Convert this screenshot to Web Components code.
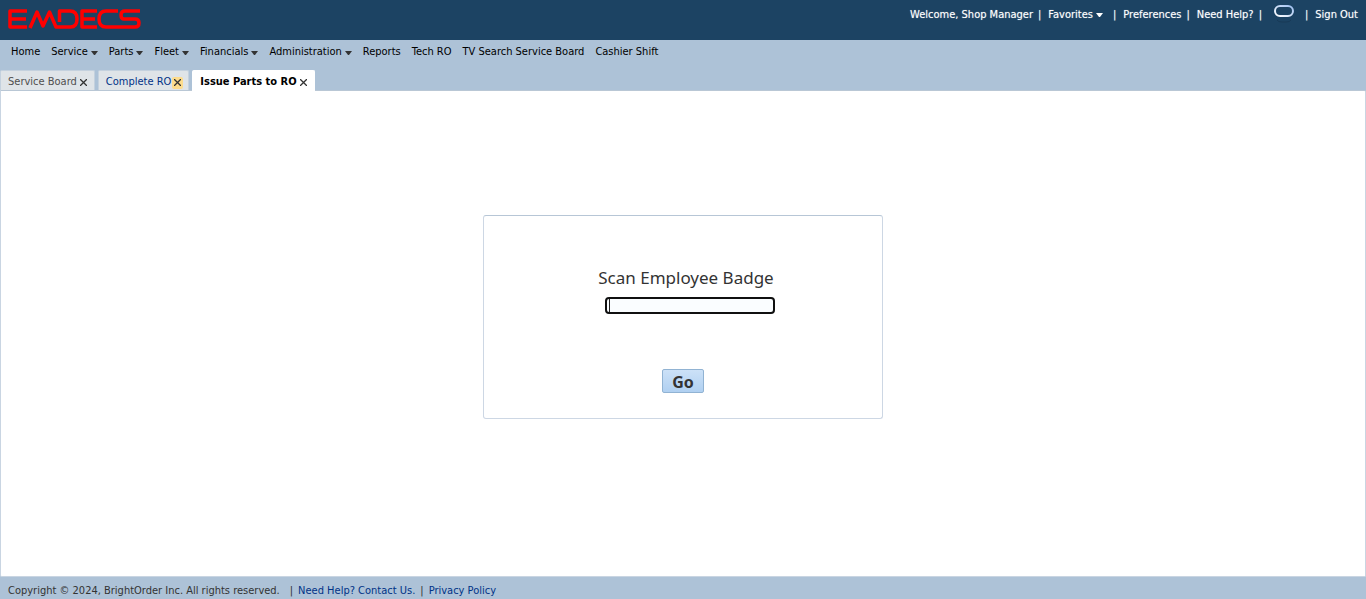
<!DOCTYPE html>
<html lang="en">
<head>
<meta charset="utf-8">
<title>EMDECS - Issue Parts to RO</title>
<style>
body { margin: 0; font: 11px/16px "DejaVu Sans Condensed", "Noto Sans", sans-serif; background: #adc2d7; color: #000; }
</style>
</head>
<body>
<fleet-app>
  <app-header slot="header">
    <header-item>Welcome, Shop Manager</header-item>
    <header-item href="#favorites" menu>Favorites</header-item>
    <header-item href="#preferences">Preferences</header-item>
    <header-item href="#help">Need Help?</header-item>
    <header-item><status-oval></status-oval></header-item>
    <header-item href="#signout">Sign Out</header-item>
  </app-header>
  <main-menu slot="menu">
    <menu-item>Home</menu-item>
    <menu-item menu>Service</menu-item>
    <menu-item menu>Parts</menu-item>
    <menu-item menu>Fleet</menu-item>
    <menu-item menu>Financials</menu-item>
    <menu-item menu>Administration</menu-item>
    <menu-item>Reports</menu-item>
    <menu-item>Tech RO</menu-item>
    <menu-item>TV Search Service Board</menu-item>
    <menu-item>Cashier Shift</menu-item>
  </main-menu>
  <tab-strip slot="tabs">
    <page-tab>Service Board</page-tab>
    <page-tab state="hover">Complete RO</page-tab>
    <page-tab state="active">Issue Parts to RO</page-tab>
  </tab-strip>
  <badge-panel></badge-panel>
  <app-footer slot="footer"></app-footer>
</fleet-app>
<script>
const define = (name, html, setup) => customElements.define(name, class extends HTMLElement {
  connectedCallback() {
    if (this.shadowRoot) return;
    this.attachShadow({ mode: 'open' }).innerHTML = html;
    if (setup) setup(this, this.shadowRoot);
  }
});
const arrow = '<svg class="arrow" width="7" height="4" viewBox="0 0 7 4" aria-hidden="true"><path d="M0 0h7L4 4H3z" fill="currentColor"/></svg>';

define('fleet-app', `
<style>
  :host { display: flex; flex-direction: column; min-height: 100vh; }
  main { flex: 1; display: flex; align-items: center; justify-content: center; box-sizing: border-box;
    background: #fff; border: 1px solid #c9d5e2; border-top-color: #b9c7d5; border-radius: 0 2px 2px 2px; }
</style>
<slot name="header"></slot><slot name="menu"></slot><slot name="tabs"></slot>
<main><slot></slot></main><slot name="footer"></slot>`);

define('app-header', `
<style>
  :host { display: flex; justify-content: space-between; box-sizing: border-box; height: 40px;
    padding: 6px 8px 0; background: #1c4363; color: #fff; }
  nav { display: flex; padding-top: 1px; }
</style>
<svg width="134" height="26" viewBox="8 6 134 26" role="img" aria-label="EMDECS" fill="none" stroke="#f00" stroke-width="3.500" stroke-linejoin="round">
  <path d="M27 11H10V27H27M10 19H26"/>
  <path d="M30 28L37 12L43 26L49.500 12L56 27H70.500Q77 27 77 19Q77 11 70 11H59.500V22"/>
  <path d="M97 11H82V27H97M82 19H95"/>
  <path d="M118 11H106Q99 11 99 19Q99 27 106 27H135Q139 27 139 23Q139 19 135 19H124Q121 19 121 15Q121 11 125 11H140"/>
</svg>
<nav aria-label="User"><slot></slot></nav>`);

define('header-item', `
<style>
  :host { display: flex; align-items: flex-start; text-shadow: 0 0 1px #ffffff80; white-space: nowrap; }
  :host(:not(:last-child))::after { content: "|"; margin: 0 7px 0 5px; }
  :host([menu]:not(:last-child))::after { margin-left: 10px; }
  a { color: inherit; text-decoration: none; }
  .arrow { margin-left: 3px; margin-bottom: 1px; }
</style>
<slot></slot>`, (el, root) => {
  if (!el.hasAttribute('href')) return;
  const link = document.createElement('a');
  link.href = el.getAttribute('href');
  link.innerHTML = '<slot></slot>' + (el.hasAttribute('menu') ? arrow : '');
  root.querySelector('slot').replaceWith(link);
});

define('status-oval', `
<style>:host { display: block; padding: 0 6px 0 5px; } svg { display: block; margin-top: -3px; }</style>
<svg width="20" height="19" viewBox="0 0 20 19" role="img" aria-label="Status">
  <defs><linearGradient id="g" x1="0" y1="1" x2="1" y2="0"><stop offset="0" stop-color="#fff"/><stop offset="1" stop-color="#9dbff0"/></linearGradient></defs>
  <rect x="1" y="2" width="18" height="10" rx="5" fill="none" stroke="url(#g)" stroke-width="2"/>
  <path d="M3 16q1 2 5 2h4q4 0 5-2" fill="none" stroke="#183a57"/>
</svg>`);

define('main-menu', `
<style>:host { display: block; } nav { display: flex; gap: 11px; padding: 4px 11px 10px; }</style>
<nav aria-label="Main"><slot></slot></nav>`);

define('menu-item', `
<style>
  :host { display: block; white-space: nowrap; }
  a { color: #000; text-decoration: none; }
  .arrow { margin-left: 3px; color: #333; }
</style>
<a href="#"><slot></slot></a>`, (el, root) => {
  if (el.hasAttribute('menu')) root.querySelector('a').insertAdjacentHTML('beforeend', arrow);
});

define('tab-strip', `
<style>:host { display: flex; gap: 3px; }</style><slot></slot>`);

define('page-tab', `
<style>
  :host { display: flex; align-items: center; gap: 1px; box-sizing: border-box; height: 20px; padding: 2px 5px 0 7px;
    background: #dfe4e8; border: 1px solid #c4d1de; border-bottom: 0; border-radius: 2px 2px 0 0; white-space: nowrap; }
  :host([state="active"]) { background: #fff; border-color: #fff; height: 21px; margin-bottom: -1px; padding-bottom: 1px; z-index: 1; font-weight: bold; }
  a { color: #4f4f4f; text-decoration: none; }
  :host([state="hover"]) a { color: #003286; }
  :host([state="active"]) a { color: #000; }
  button { display: flex; align-items: center; justify-content: center; width: 11px; height: 12px; margin: 2px 0 0; padding: 0; border: 0; border-radius: 2px; background: none; color: #333; }
  :host([state="hover"]) button { background: #fddc8c; }
</style>
<a href="#"><slot></slot></a>
<button type="button" aria-label="Close tab"><svg width="7" height="7" viewBox="0 0 7 7"><path d="M0 0L7 7M7 0L0 7" stroke="currentColor" stroke-width="1.300"/></svg></button>`);

define('badge-panel', `
<style>
  :host { display: block; box-sizing: border-box; width: 400px; padding: 49px 0 25px; margin-bottom: 34px;
    border: 1px solid #cdd7e4; border-top-color: #b7c6d6; border-radius: 3px; color: #333; }
  form { display: flex; flex-direction: column; align-items: center; }
  label { font: 17px/26px "Noto Sans", sans-serif; margin-left: 6px; }
  input { box-sizing: border-box; width: 170px; height: 17px; margin: 6px 0 55px 14px; padding: 0 2px;
    border: 2px solid #101010; border-radius: 4px; outline: 0; font: inherit; color: #000; caret-color: transparent;
    background: linear-gradient(#222, #222) 2px 0 / 1px 100% no-repeat #fafdff; }
  button { box-sizing: border-box; width: 42px; height: 24px; padding: 2px 0 0; border: 1px solid #91b3d3; border-radius: 2px;
    background: linear-gradient(#cce1f7, #b0d0f1); color: #333; font: bold 16px/20px "Noto Sans", sans-serif; }
</style>
<form>
  <label for="badge">Scan Employee Badge</label>
  <input id="badge" type="text" autocomplete="off">
  <button type="button">Go</button>
</form>`, (el, root) => root.querySelector('input').focus());

define('app-footer', `
<style>
  :host { display: block; padding: 6px 8px 0; color: #333; }
  footer { display: flex; gap: 5px; }
  .copy { margin-right: 5px; }
  a { color: #003286; text-decoration: none; }
</style>
<footer><span class="copy">Copyright © 2024, BrightOrder Inc. All rights reserved.</span><span>|</span><a href="#contact">Need Help? Contact Us.</a><span>|</span><a href="#privacy">Privacy Policy</a></footer>`);
</script>
</body>
</html>
